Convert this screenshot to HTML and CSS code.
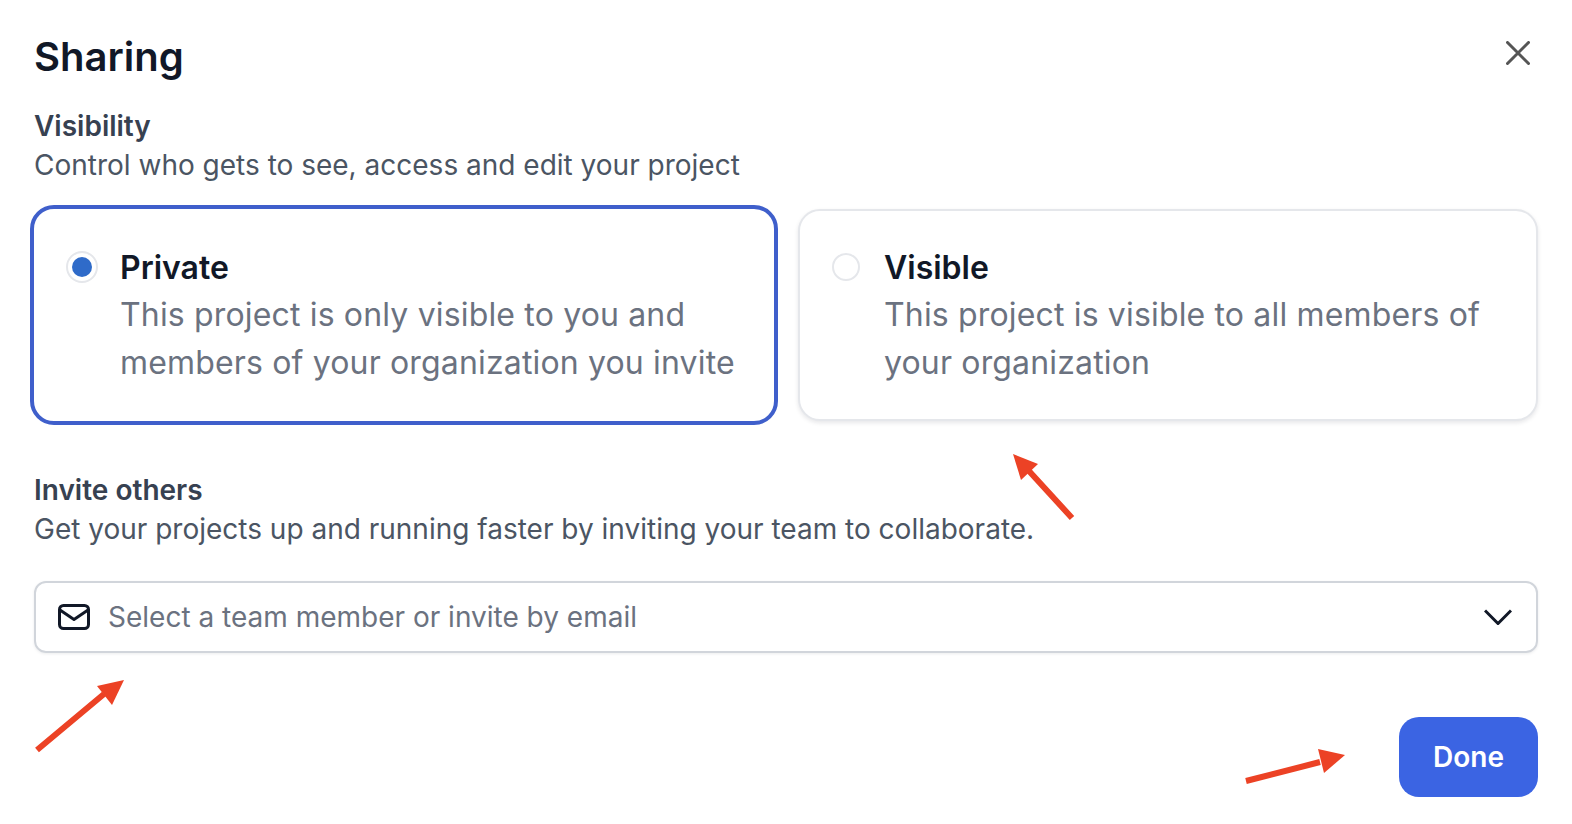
FILE: index.html
```html
<!DOCTYPE html>
<html lang="en">
<head>
<meta charset="utf-8">
<title>Sharing</title>
<link rel="stylesheet" href="styles.css">
</head>
<body>
<main class="dialog">
  <header class="head">
    <h1 class="title">Sharing</h1>
    <button class="close" aria-label="Close">
      <svg width="24" height="24" viewBox="0 0 24 24"><path d="M1.5 1.5l21 21M22.500 1.500l-21 21"/></svg>
    </button>
  </header>
  <section class="section">
    <h2 class="label">Visibility</h2>
    <p class="help">Control who gets to see, access and edit your project</p>
  </section>
  <div class="options">
    <div class="card card-on">
      <span class="radio radio-on"></span>
      <div class="card-text">
        <div class="card-title">Private</div>
        <div class="card-desc">This project is only visible to you and members of your organization you invite</div>
      </div>
    </div>
    <div class="card card-off">
      <span class="radio radio-off"></span>
      <div class="card-text">
        <div class="card-title">Visible</div>
        <div class="card-desc">This project is visible to all members of your organization</div>
      </div>
    </div>
  </div>
  <section class="section invite">
    <h2 class="label">Invite others</h2>
    <p class="help">Get your projects up and running faster by inviting your team to collaborate.</p>
  </section>
  <div class="select">
    <svg class="mail" width="32" height="26" viewBox="0 0 32 26"><rect x="1.500" y="1.500" width="29" height="23" rx="4"/><path d="M2 6l14 9.500L30 6"/></svg>
    <span class="placeholder">Select a team member or invite by email</span>
    <svg class="chev" width="28" height="16" viewBox="0 0 28 16"><path d="M1 1.500l13 13 13-13"/></svg>
  </div>
  <div class="foot"><button class="done">Done</button></div>
</main>
<svg class="arrows" width="1572" height="824" viewBox="0 0 1572 824">
  <path d="M1072 518L1029 471M37 750L104 694M1246 781L1320 762"/>
  <polygon points="1013,454 1038,464 1021,480"/>
  <polygon points="124,680 97,686 112,705"/>
  <polygon points="1345,755 1318,749 1324,773"/>
</svg>
</body>
</html>
```
FILE: styles.css
```css
* { box-sizing: border-box; }
html, body { margin: 0; height: 100%; background: #fff; overflow: hidden; }
body { font-family: Inter, "Liberation Sans", sans-serif; position: relative; }
.dialog { padding: 32px 34px 0 34px; }
.head { display: flex; justify-content: space-between; align-items: center; height: 50px; }
.title { margin: 0; font-size: 40px; line-height: 50px; font-weight: 600; color: #111827; }
.close { border: 0; background: none; padding: 0; margin-right: 8px; margin-top: -8px; display: flex; }
.close path { fill: none; stroke: #555; stroke-width: 3; stroke-linecap: round; }
.section { margin-top: 23px; }
.label { margin: 0 0 -2px; font-size: 28px; line-height: 42px; font-weight: 600; color: #374151; }
.help { margin: 0; font-size: 28px; line-height: 40px; font-weight: 400; color: #4b5563; }
.options { display: grid; grid-template-columns: 748px 740px; column-gap: 20px; align-items: center; margin: 20px 0 0 -4px; }
.card { display: flex; background: #fff; border-style: solid; }
.card-on { height: 220px; border-width: 4px; border-color: #3f5fcb; border-radius: 24px; padding: 34px 20px 0 32px; }
.card-off { height: 212px; border-width: 2px; border-color: #e5e7eb; border-radius: 22px; padding: 32px 20px 0 32px; box-shadow: 0 2px 4px rgba(17, 24, 39, .1); }
.radio { flex: none; border-radius: 50%; background: #fff; }
.radio-on { width: 32px; height: 32px; border: 2px solid #e5e7eb; display: flex; align-items: center; justify-content: center; margin-top: 8px; }
.radio-on::after { content: ""; width: 20px; height: 20px; border-radius: 50%; background: #2f6bc9; }
.radio-off { width: 28px; height: 28px; border: 2px solid #e5e7eb; margin-top: 10px; }
.card-text { margin-left: 22px; }
.card-off .card-text { margin-left: 24px; }
.card-title { margin-bottom: -2px; font-size: 32px; line-height: 50px; font-weight: 600; color: #111827; }
.card-desc { font-size: 32px; line-height: 48px; color: #6b7280; letter-spacing: .16px; }
.invite { margin-top: 44px; }
.select { display: flex; align-items: center; height: 72px; margin-top: 32px; padding: 0 24px 0 22px; border: 2px solid #d1d5db; border-radius: 12px; box-shadow: 0 1px 3px rgba(17, 24, 39, .08); }
.mail { flex: none; }
.mail rect, .mail path { fill: none; stroke: #111827; stroke-width: 3; stroke-linejoin: round; }
.placeholder { flex: 1; margin-left: 18px; font-size: 28px; color: #6b7280; }
.chev { flex: none; }
.chev path { fill: none; stroke: #111827; stroke-width: 3; }
.foot { display: flex; justify-content: flex-end; margin-top: 64px; }
.done { width: 139px; height: 80px; border: 0; border-radius: 20px; background: #3b64e3; color: #fff; font: 600 28px Inter, "Liberation Sans", sans-serif; }
.arrows { position: absolute; left: 0; top: 0; pointer-events: none; }
.arrows path { fill: none; stroke: #ec4225; stroke-width: 6; }
.arrows polygon { fill: #ec4225; }
```
